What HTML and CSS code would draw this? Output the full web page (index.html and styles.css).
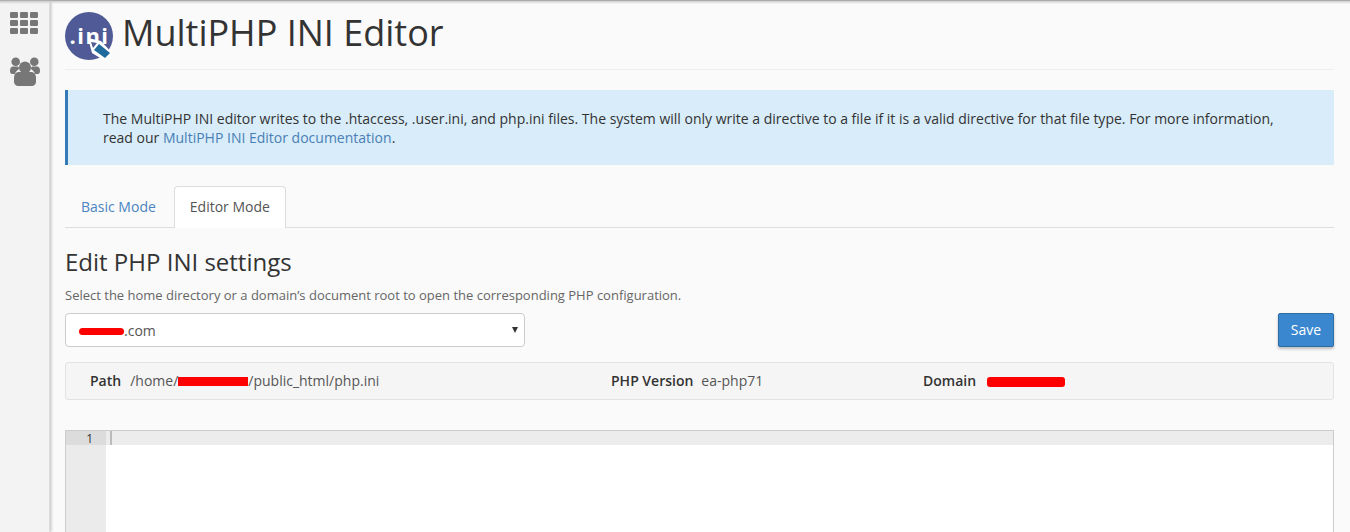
FILE: index.html
```html
<!DOCTYPE html>
<html lang="en">
<head>
<meta charset="utf-8">
<title>MultiPHP INI Editor</title>
<link rel="stylesheet" href="styles.css">
</head>
<body>
<div class="app">
  <nav class="sidebar">
    <svg class="nav-icon nav-grid" width="28" height="22" viewBox="0 0 28 22" fill="#777">
      <rect x="0" y="0" width="8" height="6" rx="1.2"/><rect x="10" y="0" width="8" height="6" rx="1.2"/><rect x="20" y="0" width="8" height="6" rx="1.2"/>
      <rect x="0" y="8" width="8" height="6" rx="1.2"/><rect x="10" y="8" width="8" height="6" rx="1.2"/><rect x="20" y="8" width="8" height="6" rx="1.2"/>
      <rect x="0" y="16" width="8" height="6" rx="1.2"/><rect x="10" y="16" width="8" height="6" rx="1.2"/><rect x="20" y="16" width="8" height="6" rx="1.2"/>
    </svg>
    <svg class="nav-icon" width="30" height="29" viewBox="0 0 30 29" fill="#777">
      <circle cx="5.7" cy="4.7" r="4.3"/><circle cx="24.3" cy="4.7" r="4.3"/>
      <path d="M0 14c0-3 1-4.500 3-4.500h5l1.500 2c-2 1.500-4 3-4.500 5.500H2c-1 0-2-1-2-3zM30 14c0-3-1-4.500-3-4.500h-5l-1.500 2c2 1.500 4 3 4.500 5.500h3c1 0 2-1 2-3z"/>
      <circle cx="15" cy="10.500" r="6"/>
      <path d="M4 21c0-4 2-6 5-6h12c3 0 5 2 5 6v4c0 2-2 4-4 4H8c-2 0-4-2-4-4z"/>
    </svg>
  </nav>
  <main class="content">
    <header class="page-header">
      <svg class="logo" width="50" height="50" viewBox="0 0 50 50">
        <circle cx="24" cy="24" r="24" fill="#4f5a96"/>
        <text x="24.500" y="32" text-anchor="middle" class="logo-text">.ini</text>
        <path d="M23 26l13 3 12 13-8 7-13-8z" fill="#fff"/>
        <path d="M29 38l5-6 11 9-5 5z" fill="#1f6b9c"/>
        <path d="M26 30l6 1-4 5z" fill="#4f5a96"/>
      </svg>
      <h1 class="title">MultiPHP INI Editor</h1>
    </header>
    <div class="callout">The MultiPHP INI editor writes to the .htaccess, .user.ini, and php.ini files. The system will only write a directive to a file if it is a valid directive for that file type. For more information, read our <a href="#" class="link">MultiPHP INI Editor documentation</a>.</div>
    <div class="tabs">
      <a href="#" class="tab">Basic Mode</a>
      <a href="#" class="tab tab-active">Editor Mode</a>
    </div>
    <h2 class="section-title">Edit PHP INI settings</h2>
    <p class="help">Select the home directory or a domain’s document root to open the corresponding PHP configuration.</p>
    <div class="controls">
      <div class="select">
        <span class="select-value"><span class="redact redact-domain"></span>.com</span>
        <span class="caret"></span>
      </div>
      <button class="save" type="button">Save</button>
    </div>
    <div class="info-bar">
      <div class="info info-path"><b>Path</b><span>/home/<span class="redact redact-path"></span>/public_html/php.ini</span></div>
      <div class="info info-version"><b>PHP Version</b><span>ea-php71</span></div>
      <div class="info info-domain"><b>Domain</b><span class="redact redact-host"></span></div>
    </div>
    <div class="editor">
      <div class="gutter"><div class="line-no">1</div></div>
      <div class="code"><div class="active-line"><span class="cursor"></span></div></div>
    </div>
  </main>
</div>
</body>
</html>
```
FILE: styles.css
```css
* { box-sizing: border-box; }
html, body { margin: 0; height: 100%; overflow: hidden; }
body {
  font-family: "Open Sans", "Liberation Sans", sans-serif;
  font-size: 14px;
  color: #333;
  background: #fafafa;
}
.app { position: relative; display: flex; height: 532px; border-top: 1px solid #aaa; }
.app::before {
  content: "";
  position: absolute;
  left: 0;
  right: 0;
  top: 0;
  height: 3px;
  background: linear-gradient(#ccc, rgba(204, 204, 204, 0));
}
.sidebar {
  width: 50px;
  flex: none;
  background: #f3f3f3;
  border-right: 1px solid #ddd;
  box-shadow: 1px 0 3px #bbb;
  display: flex;
  flex-direction: column;
  align-items: center;
  padding-top: 11px;
  gap: 23px;
}
.nav-icon { display: block; flex: none; }
.nav-grid { margin-left: -1px; }
.content { flex: 1; min-width: 0; padding: 0 16px 0 15px; }
.page-header {
  display: flex;
  align-items: flex-start;
  gap: 8px;
  height: 69px;
  padding-top: 11px;
  border-bottom: 1px solid #eee;
}
.logo { flex: none; }
.logo-text { font: 700 22px "Open Sans", sans-serif; letter-spacing: 1.5px; fill: #fff; }
.title { margin: -1px 0 0 -1px; font-size: 36px; font-weight: 400; line-height: 44px; color: #333; }
.callout {
  margin-top: 20px;
  height: 75px;
  padding: 19px 40px 0 35px;
  background: #d8ecf9;
  border-left: 3px solid #337ab7;
  line-height: 19px;
  color: #333;
}
.link { color: #4a7fb5; text-decoration: none; }
.tabs {
  display: flex;
  margin-top: 21px;
  height: 42px;
  border-bottom: 1px solid #ddd;
}
.tab {
  display: block;
  height: 42px;
  padding: 10px 15px 0;
  color: #4a84c0;
  text-decoration: none;
  border: 1px solid transparent;
  border-bottom: 0;
  border-radius: 4px 4px 0 0;
}
.tab-active {
  margin-left: 2px;
  color: #555;
  background: #fff;
  border-color: #ddd;
}
.section-title { margin: 17px 0 0; font-size: 24px; font-weight: 400; line-height: 34px; color: #333; }
.help { margin: 8px 0 0; font-size: 13px; line-height: 17px; color: #666; }
.controls {
  display: flex;
  justify-content: space-between;
  align-items: flex-start;
  margin-top: 8px;
}
.select {
  position: relative;
  width: 460px;
  height: 34px;
  margin-top: 1px;
  padding: 6px 13px;
  background: #fff;
  border: 1px solid #ccc;
  border-radius: 4px;
  line-height: 20px;
  color: #555;
}
.select-value { display: inline-flex; align-items: center; }
.caret {
  position: absolute;
  right: 6px;
  top: 13px;
  border-left: 3.5px solid transparent;
  border-right: 3.5px solid transparent;
  border-top: 6px solid #333;
}
.save {
  width: 56px;
  height: 34px;
  margin-top: 1px;
  padding: 0 0 1px;
  font: 14px "Open Sans", sans-serif;
  color: #fff;
  background: #3a87cf;
  border: 1px solid #2e6da4;
  border-radius: 2px;
  box-shadow: 0 2px 3px rgba(0, 0, 0, .25);
}
.redact { display: inline-block; background: #f00; }
.redact-domain { width: 45px; height: 7px; border-radius: 4px; margin-top: 2px; }
.redact-path { width: 70px; height: 9px; margin-top: 3px; }
.redact-host { width: 78px; height: 10px; margin-top: 3px; border-radius: 3px; }
.info-bar {
  display: flex;
  align-items: center;
  height: 38px;
  margin-top: 15px;
  padding: 0 0 2px 24px;
  background: #f5f5f5;
  border: 1px solid #e3e3e3;
  border-radius: 3px;
}
.info { display: flex; align-items: center; }
.info b { font-weight: 600; margin-right: 8px; color: #333; }
.info span { color: #555; }
.info-path { width: 521px; }
.info-path b { margin-right: 9px; }
.info-version { width: 312px; }
.info-domain b { margin-right: 11px; }
.editor {
  display: flex;
  height: 110px;
  margin-top: 30px;
  background: #fff;
  border: 1px solid #ccc;
  border-bottom: 0;
}
.gutter { width: 40px; flex: none; background: #ebebeb; }
.line-no {
  height: 14px;
  padding-right: 13px;
  text-align: right;
  font-size: 12px;
  line-height: 16px;
  background: #dcdcdc;
  color: #333;
}
.code { flex: 1; }
.active-line { height: 14px; background: #ececec; padding-left: 4px; }
.cursor { display: block; width: 2px; height: 14px; background: #bbb; }
```
